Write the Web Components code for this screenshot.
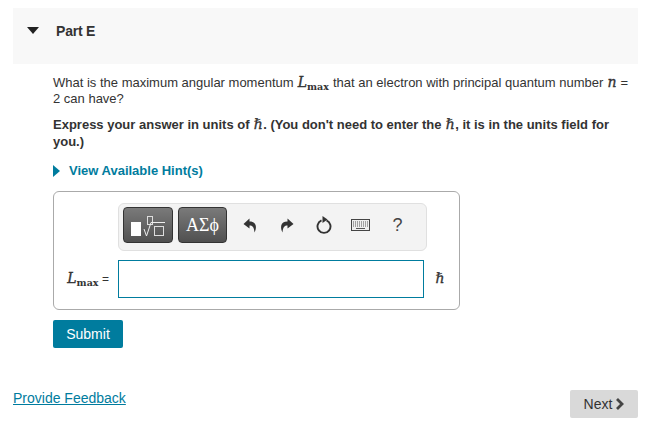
<!DOCTYPE html>
<html lang="en">
<head>
<meta charset="utf-8">
<title>Part E</title>
<style>
  html, body { margin: 0; padding: 0; background: #fff; }
  body { font: 13px/16px "Liberation Sans", Arial, sans-serif; color: #333; }
</style>
</head>
<body>
<part-page></part-page>

<script>
// Inline math: italic serif with an optional bold subscript
class MathVar extends HTMLElement {
  constructor() {
    super();
    const sub = this.getAttribute("sub");
    this.attachShadow({ mode: "open" }).innerHTML = `
      <style>
        :host { display: inline-block; margin: 0 .5px; line-height: 12px; font-family: "DejaVu Serif", serif; font-style: italic; font-weight: normal; font-size: 14px; color: #333; -webkit-text-stroke: .35px #333; }
        sub { font: bold 9.500px/8px "DejaVu Serif", serif; vertical-align: -3px; -webkit-text-stroke: 0; }
      </style><slot></slot>${sub ? `<sub>${sub}</sub>` : ""}`;
  }
}
customElements.define("math-var", MathVar);

class PartHeader extends HTMLElement {
  constructor() {
    super();
    this.attachShadow({ mode: "open" }).innerHTML = `
      <style>
        :host { display: flex; align-items: flex-start; height: 56px; background: #f8f8f8; }
        svg { margin: 19px 0 0 14px; }
        h2 { margin: 15px 0 0 17px; font: bold 14px/16px "Liberation Sans", sans-serif; color: #333; letter-spacing: -.2px; }
      </style>
      <svg width="12" height="7" viewBox="0 0 12 7"><path d="M0 0H12L6 7Z" fill="#222"/></svg>
      <h2><slot></slot></h2>`;
  }
}
customElements.define("part-header", PartHeader);

class HintToggle extends HTMLElement {
  constructor() {
    super();
    this.attachShadow({ mode: "open" }).innerHTML = `
      <style>
        :host { display: flex; align-items: center; gap: 9px; font: bold 13px/16px "Liberation Sans", sans-serif; color: #007c9e; }
      </style>
      <svg width="7" height="12" viewBox="0 0 7 12"><path d="M0 0L7 6L0 12Z" fill="#007c9e"/></svg>
      <span><slot></slot></span>`;
  }
}
customElements.define("hint-toggle", HintToggle);

class MathToolbar extends HTMLElement {
  constructor() {
    super();
    this.attachShadow({ mode: "open" }).innerHTML = `
      <style>
        :host { display: flex; align-items: center; box-sizing: border-box; width: 309px; height: 48px; padding: 3px 4px 7px; background: #f3f3f3; border: 1px solid #e0e0e0; border-radius: 6px; }
        .tool { box-sizing: border-box; height: 36px; display: flex; align-items: center; justify-content: center; border: 1px solid #333; border-radius: 4px; background: linear-gradient(#7a7a7a, #505050); color: #fff; }
        .templates { width: 50px; }
        .symbols { width: 49px; margin-left: 5px; font: 18px "Liberation Serif", serif; }
        .icon { display: flex; justify-content: center; align-items: center; width: 37px; height: 36px; }
        .undo { margin-left: 4px; }
        .help { font: 18px "Liberation Sans", sans-serif; color: #444; }
      </style>
      <div class="tool templates">
        <svg width="40" height="28" viewBox="0 0 40 28" fill="none">
          <rect x="3" y="11" width="10" height="14" fill="#fff"/>
          <rect x="19.500" y="5.500" width="5" height="8" stroke="#ddd"/>
          <path d="M16 18L18.500 25L23 11.500H37" stroke="#eee"/>
          <rect x="26.500" y="15.500" width="9" height="9" stroke="#ddd"/>
        </svg>
      </div>
      <div class="tool symbols">ΑΣϕ</div>
      <div class="icon undo">
        <svg width="14" height="15" viewBox="0 0 14 15"><path d="M6.500 .5L.5 6L6.500 10.500V7.500C9.500 7.500 11 9 11.500 14.500C13.800 10 14 3.500 6.500 3.500Z" fill="#333"/></svg>
      </div>
      <div class="icon">
        <svg width="14" height="15" viewBox="0 0 14 15"><path d="M7.500 .5L13.500 6L7.500 10.500V7.500C4.500 7.500 3 9 2.500 14.500C.2 10 0 3.500 7.500 3.500Z" fill="#333"/></svg>
      </div>
      <div class="icon">
        <svg width="16" height="18" viewBox="0 0 16 18" fill="none"><path d="M5.500 4.400A6.500 6.500 0 1 0 10.500 4.400" stroke="#333" stroke-width="1.900"/><path d="M6.500 0L11.500 3.500L6.500 7Z" fill="#333"/></svg>
      </div>
      <div class="icon">
        <svg width="19" height="12" viewBox="0 0 19 12" fill="none"><rect x=".5" y=".5" width="18" height="11" fill="#eee" stroke="#444"/><path d="M2 3H17M2 5H17M2 7H17" stroke="#555" stroke-dasharray="1 1"/><path d="M5 9.500H14" stroke="#555"/></svg>
      </div>
      <div class="icon help">?</div>`;
  }
}
customElements.define("math-toolbar", MathToolbar);

class AnswerBox extends HTMLElement {
  constructor() {
    super();
    this.attachShadow({ mode: "open" }).innerHTML = `
      <style>
        :host { display: block; box-sizing: border-box; width: 407px; height: 119px; padding: 11px 0 0 64px; border: 1px solid #aaa; border-radius: 6px; }
        .row { display: flex; align-items: center; margin-top: 9px; }
        .label { display: flex; justify-content: flex-end; align-items: baseline; gap: 3px; width: 55px; margin-left: -64px; padding-right: 9px; font-size: 12px; white-space: nowrap; }
        input { box-sizing: border-box; width: 306px; height: 38px; margin: 0; border: 1px solid #007c9e; background: #fff; outline: none; }
        .units { margin-left: 11px; }
      </style>
      <math-toolbar></math-toolbar>
      <div class="row">
        <span class="label"><math-var sub="max">L</math-var> =</span>
        <input type="text" aria-label="answer">
        <span class="units"><math-var>ℏ</math-var></span>
      </div>`;
  }
}
customElements.define("answer-box", AnswerBox);

class PartPage extends HTMLElement {
  constructor() {
    super();
    this.attachShadow({ mode: "open" }).innerHTML = `
      <style>
        :host { display: block; box-sizing: border-box; width: 651px; height: 426px; padding: 8px 13px 0; }
        .body { padding: 11px 0 0 40px; }
        p { margin: 0; }
        .lead { width: 580px; }
        .note { width: 560px; margin-top: 9px; font-weight: bold; line-height: 17px; }
        hint-toggle { margin-top: 13px; }
        answer-box { margin-top: 12px; }
        .submit { display: block; box-sizing: border-box; width: 70px; height: 28px; margin-top: 10px; padding: 0; border: 0; border-radius: 2px; background: #007c9e; color: #fff; font: 14px "Liberation Sans", sans-serif; }
        .foot { display: flex; justify-content: space-between; align-items: flex-start; margin-top: 42px; }
        a { color: #007c9e; font-size: 14px; line-height: 16px; text-decoration: underline; }
        .next { display: flex; align-items: center; justify-content: center; gap: 3px; box-sizing: border-box; width: 68px; height: 28px; border-radius: 2px; background: #d9d9d9; color: #333; font-size: 14px; }
      </style>
      <part-header>Part E</part-header>
      <div class="body">
        <p class="lead">What is the maximum angular momentum <math-var sub="max">L</math-var> that an electron with principal quantum number <math-var>n</math-var> = 2 can have?</p>
        <p class="note">Express your answer in units of <math-var>ℏ</math-var>. (You don't need to enter the <math-var>ℏ</math-var>, it is in the units field for you.)</p>
        <hint-toggle>View Available Hint(s)</hint-toggle>
        <answer-box></answer-box>
        <button class="submit">Submit</button>
      </div>
      <div class="foot">
        <a href="#">Provide Feedback</a>
        <div class="next">Next
          <svg width="9" height="12" viewBox="0 0 9 12" fill="none"><path d="M2 1L7 6L2 11" stroke="#444" stroke-width="2.800"/></svg>
        </div>
      </div>`;
  }
}
customElements.define("part-page", PartPage);
</script>
</body>
</html>
